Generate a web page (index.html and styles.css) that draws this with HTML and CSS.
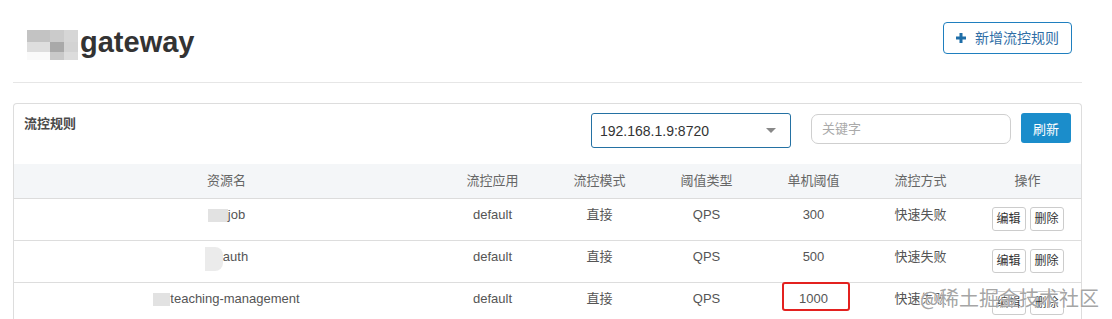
FILE: index.html
```html
<!DOCTYPE html>
<html lang="zh-CN">
<head>
<meta charset="utf-8">
<title>gateway 流控规则</title>
<link rel="stylesheet" href="styles.css">
</head>
<body>
<div class="page">
  <div class="page-header">
    <h1 class="title"><span class="mosaic"><i class="m1"></i><i class="m2"></i><i class="m3"></i><i class="m4"></i><i class="m5"></i><i class="m6"></i><i class="m7"></i><i class="m8"></i><i class="m9"></i></span>gateway</h1>
    <button class="btn-add">
      <svg class="plus" width="10" height="10" viewBox="0 0 10 10"><rect x="3.5" y="0" width="3" height="10" fill="#1f6ea8"/><rect x="0" y="3.5" width="10" height="3" fill="#1f6ea8"/></svg>
      <span>新增流控规则</span>
    </button>
  </div>

  <div class="panel">
    <div class="panel-heading">
      <div class="panel-title">流控规则</div>
      <div class="controls">
        <div class="select">
          <span>192.168.1.9:8720</span>
          <span class="caret"></span>
        </div>
        <div class="search">关键字</div>
        <button class="btn-refresh">刷新</button>
      </div>
    </div>
    <table class="rules">
      <colgroup>
        <col class="c-name"><col class="c"><col class="c"><col class="c"><col class="c"><col class="c"><col class="c">
      </colgroup>
      <thead>
        <tr><th>资源名</th><th>流控应用</th><th>流控模式</th><th>阈值类型</th><th>单机阈值</th><th>流控方式</th><th>操作</th></tr>
      </thead>
      <tbody>
        <tr>
          <td><span class="res"><i class="blur b-job"></i>job</span></td>
          <td>default</td><td>直接</td><td>QPS</td><td>300</td><td>快速失败</td>
          <td class="ops"><button class="btn-sm">编辑</button><button class="btn-sm">删除</button></td>
        </tr>
        <tr>
          <td><span class="res"><i class="blur b-auth"></i>auth</span></td>
          <td>default</td><td>直接</td><td>QPS</td><td>500</td><td>快速失败</td>
          <td class="ops"><button class="btn-sm">编辑</button><button class="btn-sm">删除</button></td>
        </tr>
        <tr>
          <td><span class="res"><i class="blur b-teach"></i>teaching-management</span></td>
          <td>default</td><td>直接</td><td>QPS</td><td class="marked">1000<span class="redbox"></span></td><td>快速失败</td>
          <td class="ops"><button class="btn-sm">编辑</button><button class="btn-sm">删除</button></td>
        </tr>
      </tbody>
    </table>
  </div>
</div>
<div class="watermark">@稀土掘金技术社区</div>
</body>
</html>
```

FILE: styles.css
```css
* { box-sizing: border-box; }
html, body { margin: 0; padding: 0; background: #fff; }
body {
  font-family: "Liberation Sans", "Noto Sans CJK SC", sans-serif;
  font-size: 13px;
  color: #333;
  position: relative;
  width: 1112px;
  height: 319px;
  overflow: hidden;
}
.page { width: 1069px; margin-left: 13px; }

.page-header {
  height: 83px;
  border-bottom: 1px solid #e6e6e6;
  display: flex;
  justify-content: space-between;
  align-items: flex-start;
}
.title {
  margin: 26px 0 0 14px;
  font-size: 29px;
  line-height: 32px;
  font-weight: bold;
  color: #333;
  display: flex;
  align-items: flex-start;
}
.mosaic {
  display: grid;
  grid-template-columns: 23px 14px 14px;
  grid-template-rows: 12px 10px 8px;
  margin-top: 4px;
  width: 51px;
  height: 30px;
  margin-right: 2px;
}
.mosaic i { display: block; }
.m1 { background: #c3c3c3; }
.m2 { background: #cbcbcb; }
.m3 { background: #d6d6d6; }
.m4 { background: #dedede; }
.m5 { background: #a9a9a9; }
.m6 { background: #d3d3d3; }
.m7 { background: #fafafa; }
.m8 { background: #c9c9c9; }
.m9 { background: #dcdcdc; }

.btn-add {
  margin: 22px 10px 0 0;
  width: 129px;
  height: 32px;
  border: 1px solid #1f7fbf;
  border-radius: 4px;
  background: #fff;
  color: #2f6ea6;
  font-family: inherit;
  font-size: 14px;
  display: flex;
  align-items: center;
  justify-content: center;
  gap: 9px;
  padding: 0;
  cursor: pointer;
}
.btn-add span { line-height: 18px; }

.panel {
  margin-top: 20px;
  border: 1px solid #dddddd;
  border-radius: 4px;
  border-bottom: none;
  overflow: hidden;
}
.panel-heading {
  display: flex;
  justify-content: space-between;
  align-items: flex-start;
  padding: 9px 10px 16px 10px;
}
.panel-title {
  margin-top: 2px;
  line-height: 18px;
  font-size: 13px;
  font-weight: bold;
  color: #4a4a4a;
}
.controls { display: flex; align-items: flex-start; }
.select {
  width: 200px;
  height: 35px;
  border: 1px solid #2471a3;
  border-radius: 3px;
  display: flex;
  align-items: center;
  justify-content: space-between;
  padding: 0 14px 0 8px;
  font-size: 14px;
  color: #333;
}
.caret {
  width: 0; height: 0;
  border-left: 5px solid transparent;
  border-right: 5px solid transparent;
  border-top: 5px solid #888;
}
.search {
  margin: 1px 0 0 20px;
  width: 200px;
  height: 30px;
  border: 1px solid #cfcfcf;
  border-radius: 7px;
  padding: 0 10px;
  line-height: 28px;
  color: #aaa;
  font-size: 13px;
}
.btn-refresh {
  margin-left: 10px;
  width: 50px;
  height: 30px;
  border: none;
  border-radius: 3px;
  background: #1b8dcb;
  color: #fff;
  font-family: inherit;
  font-size: 13px;
  padding: 0;
}

.rules {
  width: 100%;
  border-collapse: collapse;
  table-layout: fixed;
}
.c-name { width: 425px; }
.c { width: 107px; }
.rules th {
  background: #f4f6f8;
  color: #666;
  font-weight: normal;
  font-size: 13px;
  line-height: 18px;
  padding: 8px 4px;
  text-align: center;
  border-bottom: 1px solid #dcdcdc;
}
.rules td {
  text-align: center;
  vertical-align: top;
  color: #555;
  font-size: 13px;
  line-height: 16px;
  padding: 8px 4px 9px;
  border-top: 1px solid #dddddd;
  white-space: nowrap;
}
.rules td.ops {
  display: table-cell;
}
.ops { font-size: 0; }

.res { display: inline-flex; align-items: center; height: 16px; vertical-align: top; }
.blur { display: inline-block; background: #e2e2e2; }
.b-job { width: 20px; height: 13px; margin-top: 1px; }
.b-auth { width: 18px; height: 24px; margin: -2px 0 -6px; background: #ebebeb; border-radius: 0 8px 8px 0; }
.b-teach { width: 17px; height: 13px; margin-top: 1px; }

.btn-sm {
  display: inline-block;
  vertical-align: top;
  width: 34px;
  height: 24px;
  padding: 0;
  margin: 0 2px;
  border: 1px solid #cccccc;
  border-radius: 3px;
  background: #fff;
  color: #333;
  font-family: "Liberation Sans", "Noto Sans CJK SC", sans-serif;
  font-size: 12px;
  line-height: 22px;
}

.marked { position: relative; }
.redbox {
  position: absolute;
  left: 22px;
  top: -1px;
  width: 68px;
  height: 29px;
  border: 2.5px solid #e3211f;
  border-radius: 3px;
}

.watermark {
  position: absolute;
  left: 920px;
  top: 286px;
  font-family: "Noto Sans CJK SC", sans-serif;
  font-size: 20px;
  line-height: 24px;
  color: rgba(140, 140, 140, 0.8);
  text-shadow: 0 0 2px #fff, 0 0 1px #fff;
  white-space: nowrap;
}
```
